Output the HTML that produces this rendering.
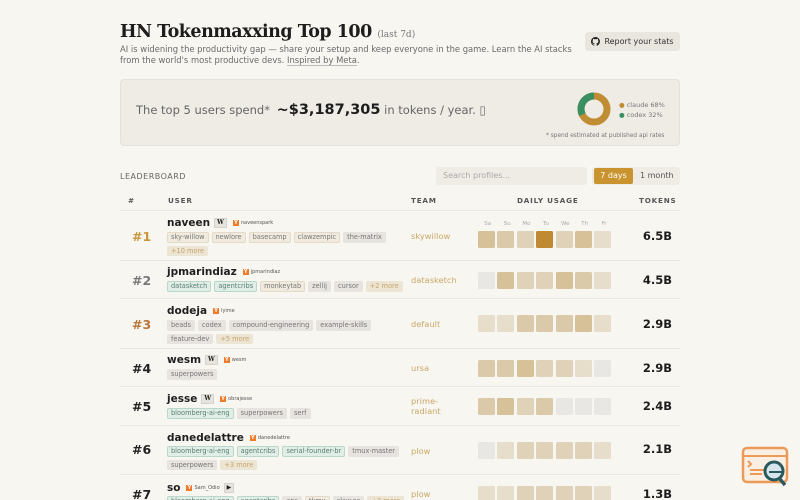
<!DOCTYPE html>
<html><head><meta charset="utf-8"><style>
*{box-sizing:border-box;margin:0;padding:0}
html,body{width:800px;height:500px;overflow:hidden}
body{background:#f8f6f1;font-family:"DejaVu Sans","Liberation Sans",sans-serif;color:#222;position:relative}
.a{position:absolute}
h1{position:absolute;left:120px;top:22px;font-family:"DejaVu Serif","Liberation Serif",serif;font-size:17.5px;font-weight:bold;letter-spacing:-0.5px;color:#1d1d1d}
h1 small{font-size:9px;font-weight:normal;color:#777;letter-spacing:0}
.sub{left:120px;top:44px;font-size:8.4px;line-height:11px;color:#6a6a6a;width:465px}
.sub u{text-decoration:none;border-bottom:1px solid #bbb}
.btn{left:585px;top:32px;width:95px;height:19px;background:#e9e6e0;border-radius:3px;font-size:8px;color:#333;display:flex;align-items:center;justify-content:center;gap:4px}
.card{left:120px;top:79px;width:560px;height:67px;background:#efece6;border:1px solid #e6e2da;border-radius:4px}
.lb{left:120px;top:172px;font-size:8px;color:#666;letter-spacing:.5px}
.search{left:436px;top:167px;width:151px;height:18px;background:#efece6;border-radius:3px;font-size:8px;color:#aaa;padding:4px 7px}
.tog{left:592px;top:167px;width:88px;height:18px;background:#efece6;border-radius:3px;font-size:8px}
.th{top:196px;font-size:7.2px;font-weight:bold;color:#555;letter-spacing:.8px}
.row{position:absolute;left:120px;width:560px;border-top:1px solid #ebe8e2}
.rk{position:absolute;left:12px;font-size:12.5px;font-weight:bold;color:#444}
.nm{position:absolute;left:47px;font-size:10.5px;font-weight:bold;color:#1f1f1f;white-space:nowrap}
.nm .w{display:inline-block;font-family:"DejaVu Serif",serif;font-size:6px;background:#e6e3dd;border:1px solid #d6d3cc;padding:0 2px;margin-left:4px;vertical-align:2px;font-weight:bold;line-height:8px}
.nm .y{display:inline-block;font-size:5px;font-weight:normal;color:#555;margin-left:6px;vertical-align:2px}
.nm .y:before{content:"Y";display:inline-block;width:6px;height:6px;background:#f07b2a;color:#fff;font-size:5px;text-align:center;line-height:6px;margin-right:2px;font-weight:bold}
.tags{position:absolute;left:47px;width:215px;font-size:0;line-height:0}
.t{display:inline-block;font-size:6.6px;line-height:8.5px;padding:0 3px;margin:0 3px 3px 0;border-radius:2px;color:#777;background:#f1ebdf;border:1px solid #e4dac7}
.g{background:#e7e4df;border-color:#e7e4df}
.gr{background:#e1eee8;border-color:#b9d8ca;color:#5a7f72}
.m{background:#ede5d4;border-color:#ede5d4;color:#c7a56d}
.tm{position:absolute;left:291px;font-size:8.3px;color:#c9a867;line-height:10px}
.cells{position:absolute;left:358px;display:flex;gap:2.4px}
.cells i{display:block;width:17px;height:17px;border-radius:1.5px}
.tk{position:absolute;right:8px;font-size:11.5px;font-weight:bold;color:#1d1d1d}
.c0{background:#e9e7e3}.c1{background:#e6ddcb}.c2{background:#e0d2b8}.c3{background:#dbcaa9}.c4{background:#d6c199}.c5{background:#c08a34}
</style></head><body>
<h1>HN Tokenmaxxing Top 100 <small>(last 7d)</small></h1>
<div class="a sub">AI is widening the productivity gap — share your setup and keep everyone in the game. Learn the AI stacks from the world's most productive devs. <u>Inspired by Meta</u>.</div>
<div class="a btn"><svg width="9" height="9" viewBox="0 0 16 16"><path fill="#222" d="M8 0a8 8 0 0 0-2.5 15.6c.4 0 .5-.2.5-.4v-1.5c-2.2.5-2.7-1-2.7-1-.4-.9-.9-1.2-.9-1.2-.7-.5.1-.5.1-.5.8.1 1.2.8 1.2.8.7 1.3 1.9.9 2.3.7.1-.5.3-.9.5-1.1-1.8-.2-3.6-.9-3.6-4 0-.9.3-1.6.8-2.1-.1-.2-.4-1 .1-2.1 0 0 .7-.2 2.2.8a7.6 7.6 0 0 1 4 0c1.5-1 2.2-.8 2.2-.8.4 1.1.2 1.9.1 2.1.5.6.8 1.3.8 2.1 0 3.1-1.9 3.8-3.6 4 .3.3.6.8.6 1.5v2.2c0 .2.1.5.6.4A8 8 0 0 0 8 0z"/></svg>Report your stats</div>
<div class="a card">
 <div class="a" style="left:15px;top:22px;font-size:11.5px;color:#666;white-space:nowrap">The top 5 users spend* <b style="font-size:14.5px;color:#1d1d1d;margin-left:3px">~$3,187,305</b> in tokens / year. ▯</div>
 <svg class="a" style="left:455px;top:11px" width="36" height="36" viewBox="0 0 36 36"><circle cx="18" cy="18" r="13" fill="none" stroke="#c18d34" stroke-width="7"/><circle cx="18" cy="18" r="13" fill="none" stroke="#3a8f62" stroke-width="7" stroke-dasharray="26.1 81.7" transform="rotate(-90 18 18) scale(1,-1) translate(0,-36)"/></svg>
 <div class="a" style="left:498px;top:20px;font-size:6.5px;color:#777;line-height:10px"><span style="color:#c18d34">●</span> claude 68%<br><span style="color:#3a8f62">●</span> codex 32%</div>
 <div class="a" style="left:425px;top:53px;font-size:5.8px;color:#777">* spend estimated at published api rates</div>
</div>
<div class="a lb">LEADERBOARD</div>
<div class="a search">Search profiles...</div>
<div class="a tog"><span class="a" style="left:2px;top:1px;width:39px;height:16px;background:#c9932f;border-radius:2px;color:#fff;text-align:center;line-height:16px">7 days</span><span class="a" style="left:48px;top:4px;color:#555">1 month</span></div>
<div class="a th" style="left:128px">#</div>
<div class="a th" style="left:168px">USER</div>
<div class="a th" style="left:411px">TEAM</div>
<div class="a th" style="left:517px">DAILY USAGE</div>
<div class="a th" style="left:639px">TOKENS</div>
<div class="a" style="left:478px;top:221px;font-size:5.5px;color:#aaa;display:flex;gap:0"><span style="width:19.4px;text-align:center">Sa</span><span style="width:19.4px;text-align:center">Su</span><span style="width:19.4px;text-align:center">Mo</span><span style="width:19.4px;text-align:center">Tu</span><span style="width:19.4px;text-align:center">We</span><span style="width:19.4px;text-align:center">Th</span><span style="width:19.4px;text-align:center">Fr</span></div>

<div class="row" style="top:210px;height:50px">
 <div class="rk" style="top:18px;color:#c8973c">#1</div>
 <div class="nm" style="top:6px">naveen<span class="w">W</span><span class="y">naveenspark</span></div>
 <div class="tags" style="top:21px;width:235px"><span class="t">sky-willow</span><span class="t">newlore</span><span class="t">basecamp</span><span class="t">clawzempic</span><span class="t g">the-matrix</span><span class="t m">+10 more</span></div>
 <div class="tm" style="top:20px">skywillow</div>
 <div class="cells" style="top:20px"><i class="c4"></i><i class="c3"></i><i class="c2"></i><i class="c5"></i><i class="c2"></i><i class="c4"></i><i class="c1"></i></div>
 <div class="tk" style="top:18px">6.5B</div>
</div>
<div class="row" style="top:260px;height:38px">
 <div class="rk" style="top:12px;color:#777">#2</div>
 <div class="nm" style="top:5px">jpmarindiaz<span class="y">jpmarindiaz</span></div>
 <div class="tags" style="top:20px;width:260px"><span class="t gr">datasketch</span><span class="t gr">agentcribs</span><span class="t">monkeytab</span><span class="t g">zellij</span><span class="t g">cursor</span><span class="t m">+2 more</span></div>
 <div class="tm" style="top:14px">datasketch</div>
 <div class="cells" style="top:11px"><i class="c0"></i><i class="c4"></i><i class="c2"></i><i class="c2"></i><i class="c4"></i><i class="c3"></i><i class="c1"></i></div>
 <div class="tk" style="top:12px">4.5B</div>
</div>
<div class="row" style="top:298px;height:50px">
 <div class="rk" style="top:18px;color:#b9753a">#3</div>
 <div class="nm" style="top:6px">dodeja<span class="y">lyime</span></div>
 <div class="tags" style="top:21px"><span class="t g">beads</span><span class="t g">codex</span><span class="t g">compound-engineering</span><span class="t g">example-skills</span><span class="t g">feature-dev</span><span class="t m">+5 more</span></div>
 <div class="tm" style="top:20px">default</div>
 <div class="cells" style="top:16px"><i class="c1"></i><i class="c1"></i><i class="c3"></i><i class="c3"></i><i class="c3"></i><i class="c4"></i><i class="c1"></i></div>
 <div class="tk" style="top:18px">2.9B</div>
</div>
<div class="row" style="top:348px;height:38px">
 <div class="rk" style="top:12px;color:#222">#4</div>
 <div class="nm" style="top:5px">wesm<span class="w">W</span><span class="y">wesm</span></div>
 <div class="tags" style="top:20px"><span class="t g">superpowers</span></div>
 <div class="tm" style="top:14px">ursa</div>
 <div class="cells" style="top:11px"><i class="c3"></i><i class="c3"></i><i class="c4"></i><i class="c2"></i><i class="c2"></i><i class="c1"></i><i class="c0"></i></div>
 <div class="tk" style="top:12px">2.9B</div>
</div>
<div class="row" style="top:386px;height:39px">
 <div class="rk" style="top:12px;color:#222">#5</div>
 <div class="nm" style="top:6px">jesse<span class="w">W</span><span class="y">obrajesse</span></div>
 <div class="tags" style="top:21px"><span class="t gr">bloomberg-ai-eng</span><span class="t g">superpowers</span><span class="t g">serf</span></div>
 <div class="tm" style="top:9px">prime-<br>radiant</div>
 <div class="cells" style="top:11px"><i class="c3"></i><i class="c4"></i><i class="c2"></i><i class="c3"></i><i class="c0"></i><i class="c0"></i><i class="c0"></i></div>
 <div class="tk" style="top:12px">2.4B</div>
</div>
<div class="row" style="top:425px;height:49px">
 <div class="rk" style="top:16px;color:#222">#6</div>
 <div class="nm" style="top:6px">danedelattre<span class="y">danedelattre</span></div>
 <div class="tags" style="top:20px;width:240px"><span class="t gr">bloomberg-ai-eng</span><span class="t gr">agentcribs</span><span class="t gr">serial-founder-br</span><span class="t g">tmux-master</span><span class="t g">superpowers</span><span class="t m">+3 more</span></div>
 <div class="tm" style="top:20px">plow</div>
 <div class="cells" style="top:16px"><i class="c0"></i><i class="c1"></i><i class="c2"></i><i class="c2"></i><i class="c2"></i><i class="c2"></i><i class="c1"></i></div>
 <div class="tk" style="top:16px">2.1B</div>
</div>
<div class="row" style="top:474px;height:26px">
 <div class="rk" style="top:12px;color:#222">#7</div>
 <div class="nm" style="top:7px">so<span class="y">Sam_Odio</span><span class="w" style="font-size:6px">▶</span></div>
 <div class="tags" style="top:21px;width:300px"><span class="t gr">bloomberg-ai-eng</span><span class="t gr">agentcribs</span><span class="t g">cpc</span><span class="t">tkmx</span><span class="t g">claw.so</span><span class="t m">+2 more</span></div>
 <div class="tm" style="top:14px">plow</div>
 <div class="cells" style="top:11px"><i class="c1"></i><i class="c1"></i><i class="c2"></i><i class="c2"></i><i class="c2"></i><i class="c2"></i><i class="c1"></i></div>
 <div class="tk" style="top:12px">1.3B</div>
</div>

<svg class="a" style="left:740px;top:445px" width="52" height="45" viewBox="0 0 52 45"><rect x="3" y="3" width="44" height="34" rx="4" fill="#fbeee2" stroke="#ec9a5a" stroke-width="2.5"/><line x1="3" y1="11" x2="47" y2="11" stroke="#ec9a5a" stroke-width="2"/><path d="M8 16l3 3-3 3M10 25h14M10 29h12" stroke="#ec9a5a" stroke-width="2" fill="none"/><circle cx="34" cy="26" r="9" fill="#d7e6ea" stroke="#285a5e" stroke-width="3"/><line x1="29" y1="27" x2="43" y2="27" stroke="#285a5e" stroke-width="2"/><line x1="39" y1="33" x2="45" y2="40" stroke="#285a5e" stroke-width="3.5"/></svg>
</body></html>
